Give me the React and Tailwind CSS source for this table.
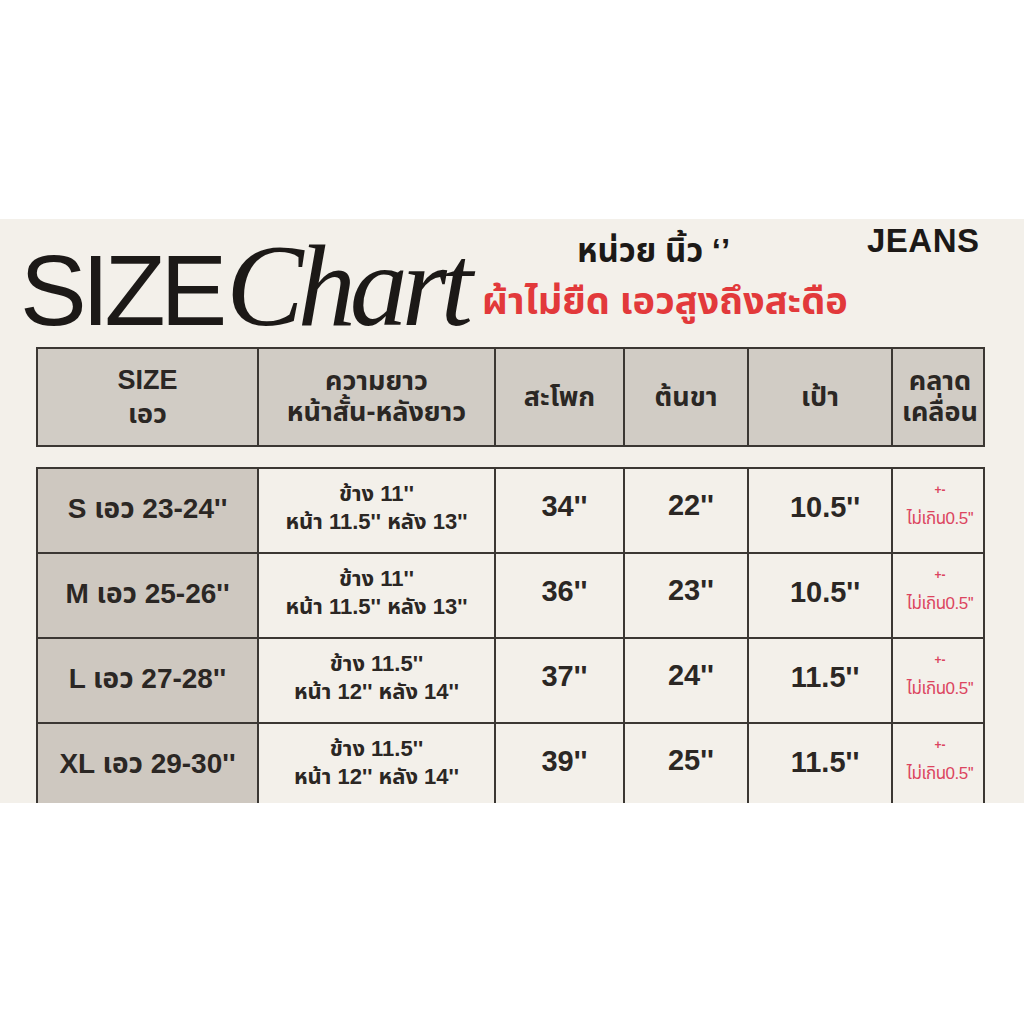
import React from 'react';

const sans = { fontFamily: '"Liberation Sans", "Noto Sans Thai", "Noto Sans Thai UI", Arial, sans-serif' };
const thaiFirst = { fontFamily: '"Noto Sans Thai", "Noto Sans Thai UI", "Liberation Sans", sans-serif' };

const cols = 'grid grid-cols-[221px_237px_129px_124px_144px_94px]';

const rows = [
    { size: 'S เอว 23-24\'\'', side: 'ข้าง 11\'\'', fb: 'หน้า 11.5\'\' หลัง 13\'\'', hip: '34\'\'', thigh: '22\'\'', rise: '10.5\'\'' },
    { size: 'M เอว 25-26\'\'', side: 'ข้าง 11\'\'', fb: 'หน้า 11.5\'\' หลัง 13\'\'', hip: '36\'\'', thigh: '23\'\'', rise: '10.5\'\'' },
    { size: 'L เอว 27-28\'\'', side: 'ข้าง 11.5\'\'', fb: 'หน้า 12\'\' หลัง 14\'\'', hip: '37\'\'', thigh: '24\'\'', rise: '11.5\'\'' },
    { size: 'XL เอว 29-30\'\'', side: 'ข้าง 11.5\'\'', fb: 'หน้า 12\'\' หลัง 14\'\'', hip: '39\'\'', thigh: '25\'\'', rise: '11.5\'\'' },
];

const HeadCell = ({ children, last }) => (
    <div className={`flex flex-col items-center justify-center text-center leading-[31px] ${last ? '' : 'border-r-2 border-[#3b3733]'}`}>
        {children}
    </div>
);

const App = () => {
    return (
        <div className="w-[1024px] h-[1024px] bg-white flex flex-col" style={sans}>
            <div className="h-[219px]" />
            <div className="h-[584px] overflow-hidden bg-[#f3f0ea] text-[#2b2724]">
                {/* title */}
                <div className="relative h-[128px]">
                    <div className="absolute left-[20px] top-[9px] flex items-baseline">
                        <span className="text-[100px] leading-none text-[#1c1917] tracking-[-5px]">SIZE</span>
                        <span className="ml-[4px] text-[116px] leading-none italic text-[#1c1917] tracking-[-6px]" style={{ fontFamily: '"Liberation Serif", "DejaVu Serif", serif' }}>Chart</span>
                    </div>
                    <div className="absolute left-[577px] top-[12px] text-[33px] font-bold text-[#1c1917] leading-[40px]" style={thaiFirst}>หน่วย นิ้ว <span style={sans}>‘’</span></div>
                    <div className="absolute left-[482px] top-[63px] text-[38px] font-bold text-[#e2393b] leading-[42px]" style={thaiFirst}>ผ้าไม่ยืด เอวสูงถึงสะดือ</div>
                    <div className="absolute left-[867px] top-[0px] text-[33px] font-bold text-[#1c1917] leading-[44px] tracking-[0.5px]">JEANS</div>
                </div>

                <div className="pl-[36px]">
                    {/* header table */}
                    <div className={`${cols} w-[949px] h-[100px] border-2 border-[#3b3733] bg-[#d1ccc5] text-[27px] font-bold`}>
                        <HeadCell><span className="leading-[34px]">SIZE</span><span className="leading-[34px]">เอว</span></HeadCell>
                        <HeadCell><span>ความยาว</span><span>หน้าสั้น-หลังยาว</span></HeadCell>
                        <HeadCell>สะโพก</HeadCell>
                        <HeadCell>ต้นขา</HeadCell>
                        <HeadCell>เป้า</HeadCell>
                        <HeadCell last><span>คลาด</span><span>เคลื่อน</span></HeadCell>
                    </div>

                    {/* body table */}
                    <div className="mt-[20px] w-[949px] border-t-2 border-x-2 border-[#3b3733]">
                        {rows.map((r) => (
                            <div key={r.size} className={`${cols} h-[85px] border-b-2 border-[#3b3733] font-bold`}>
                                <div className="flex items-center justify-center bg-[#cec8c0] border-r-2 border-[#3b3733] text-[28px] pb-[4px]">{r.size}</div>
                                <div className="flex flex-col items-center justify-center border-r-2 border-[#3b3733] text-[22px] leading-[28px] pb-[6px]">
                                    <span>{r.side}</span>
                                    <span>{r.fb}</span>
                                </div>
                                <div className="flex items-center justify-center border-r-2 border-[#3b3733] text-[29px] pl-[10px] pb-[8px]">{r.hip}</div>
                                <div className="flex items-center justify-center border-r-2 border-[#3b3733] text-[29px] pl-[10px] pb-[10px]">{r.thigh}</div>
                                <div className="flex items-center justify-center border-r-2 border-[#3b3733] text-[29px] pl-[10px] pb-[6px]">{r.rise}</div>
                                <div className="flex flex-col items-center justify-center gap-[14px] text-[#dc4560] font-normal pb-[10px]">
                                    <span className="text-[12px] leading-[12px] font-bold">+-</span>
                                    <span className="text-[17px] leading-[18px] tracking-[-0.5px]" style={thaiFirst}>ไม่เกิน<span style={sans}>0.5''</span></span>
                                </div>
                            </div>
                        ))}
                    </div>
                </div>
            </div>
            <div className="flex-1 bg-white" />
        </div>
    );
};

export default App;
